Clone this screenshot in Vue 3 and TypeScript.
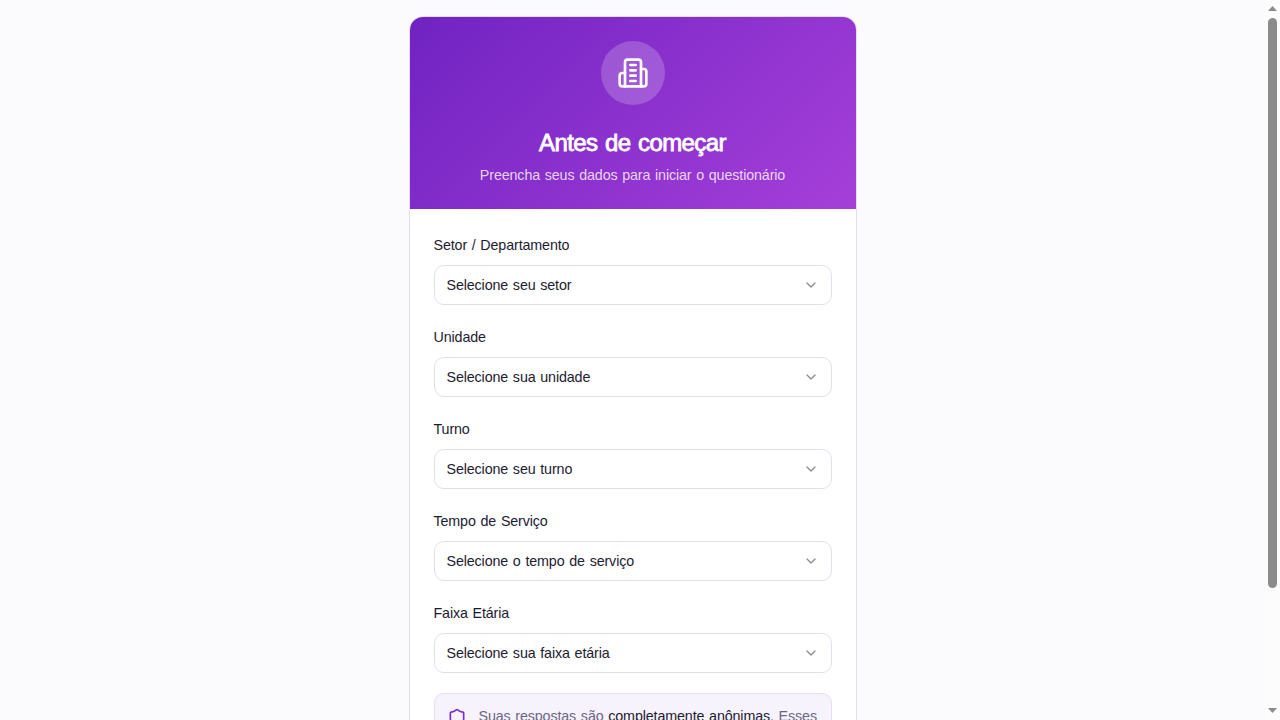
<script setup lang="ts">
interface Field {
  id: string
  label: string
  placeholder: string
}

const fields: Field[] = [
  { id: 'setor', label: 'Setor / Departamento', placeholder: 'Selecione seu setor' },
  { id: 'unidade', label: 'Unidade', placeholder: 'Selecione sua unidade' },
  { id: 'turno', label: 'Turno', placeholder: 'Selecione seu turno' },
  { id: 'tempo', label: 'Tempo de Serviço', placeholder: 'Selecione o tempo de serviço' },
  { id: 'faixa', label: 'Faixa Etária', placeholder: 'Selecione sua faixa etária' },
]
</script>

<template>
  <div class="viewport">
    <main class="page">
      <section class="card">
        <header class="hero">
          <div class="badge">
            <svg class="badge-icon" viewBox="0 0 24 24">
              <path d="M6 22V4a2 2 0 0 1 2-2h8a2 2 0 0 1 2 2v18Z" />
              <path d="M6 12H4a2 2 0 0 0-2 2v6a2 2 0 0 0 2 2h2" />
              <path d="M18 9h2a2 2 0 0 1 2 2v9a2 2 0 0 1-2 2h-2" />
              <path d="M10 6h4M10 10h4M10 14h4M10 18h4" />
            </svg>
          </div>
          <h1>Antes de começar</h1>
          <p>Preencha seus dados para iniciar o questionário</p>
        </header>
        <form class="form">
          <div v-for="f in fields" :key="f.id" class="field">
            <label :for="f.id">{{ f.label }}</label>
            <button :id="f.id" type="button" class="select">
              <span>{{ f.placeholder }}</span>
              <svg class="chevron" viewBox="0 0 24 24"><path d="m6 9 6 6 6-6" /></svg>
            </button>
          </div>
          <div class="notice">
            <svg class="shield" viewBox="0 0 24 24">
              <path d="M20 13c0 5-3.5 7.5-7.66 8.95a1 1 0 0 1-.67-.01C7.5 20.5 4 18 4 13V6a1 1 0 0 1 1-1c2 0 4.5-1.2 6.24-2.72a1.17 1.17 0 0 1 1.52 0C14.51 3.81 17 5 19 5a1 1 0 0 1 1 1z" />
            </svg>
            <p>Suas respostas são <strong>completamente anônimas</strong>. Esses</p>
          </div>
        </form>
      </section>
    </main>
    <div class="scrollbar">
      <svg class="arrow" viewBox="0 0 9 5"><path d="M4.5 0 9 5H0Z" /></svg>
      <div class="thumb"></div>
      <svg class="arrow" viewBox="0 0 9 5"><path d="M0 0h9L4.5 5Z" /></svg>
    </div>
  </div>
</template>

<style>
body {
  overflow: hidden;
  background: #fbfbfe;
}
</style>

<style scoped>
* {
  box-sizing: border-box;
  margin: 0;
}
.viewport {
  display: flex;
  height: 720px;
  overflow: hidden;
  background: #fbfbfe;
  color: #1d1a31;
  font-family: "Liberation Sans", Arial, sans-serif;
  font-size: 14.3px;
  letter-spacing: -0.13px;
  word-spacing: 0.9px;
}
.page {
  flex: 1;
  display: flex;
  justify-content: center;
  align-items: flex-start;
  padding: 16px;
}
.card {
  width: 448px;
  overflow: hidden;
  border: 1px solid #e1e0ea;
  border-radius: 14px;
  background: #fff;
}
.hero {
  display: flex;
  flex-direction: column;
  align-items: center;
  height: 192px;
  padding: 24px;
  background: linear-gradient(135deg, #7023c2, #a63fd9);
  color: #fff;
}
.badge {
  display: grid;
  place-items: center;
  width: 64px;
  height: 64px;
  margin-bottom: 22px;
  border-radius: 50%;
  background: rgb(255 255 255 / 20%);
}
svg {
  fill: none;
  stroke: currentColor;
  stroke-width: 2;
  stroke-linecap: round;
  stroke-linejoin: round;
}
.badge-icon {
  width: 32px;
  height: 32px;
}
h1 {
  margin-bottom: 6px;
  font-size: 24px;
  font-weight: 400;
  line-height: 32px;
  letter-spacing: -0.6px;
  word-spacing: 1.5px;
  -webkit-text-stroke: 0.8px currentColor;
}
.hero p {
  line-height: 20px;
  color: rgb(255 255 255 / 80%);
}
.form {
  display: flex;
  flex-direction: column;
  gap: 20px;
  padding: 24px;
}
.field {
  display: flex;
  flex-direction: column;
  gap: 8px;
}
label {
  line-height: 24px;
}
.select {
  display: flex;
  align-items: center;
  justify-content: space-between;
  height: 40px;
  padding: 0 12px;
  border: 1px solid #e1e0ea;
  border-radius: 10px;
  background: #fff;
  color: inherit;
  font: inherit;
  line-height: 20px;
  letter-spacing: inherit;
  word-spacing: inherit;
}
.chevron {
  width: 16px;
  height: 16px;
  opacity: 0.5;
}
.notice {
  display: flex;
  gap: 12px;
  height: 92px;
  padding: 12px;
  border: 1px solid #e8dcf7;
  border-radius: 10px;
  background: #f7f3fc;
  color: #6c6684;
}
.notice p {
  line-height: 20px;
  white-space: nowrap;
}
.notice strong {
  color: #1d1a31;
  font-weight: 400;
}
.shield {
  flex: none;
  width: 20px;
  height: 20px;
  margin-top: 2px;
  color: #7b2bd0;
}
.scrollbar {
  display: flex;
  flex-direction: column;
  align-items: center;
  width: 15px;
  padding: 6px 0 7px;
  background: #fcfcfc;
}
.thumb {
  width: 9px;
  height: 570px;
  margin: 7px 0 auto;
  border-radius: 5px;
  background: #8b8b8b;
}
.arrow {
  width: 9px;
  height: 5px;
  fill: #8b8b8b;
  stroke: none;
}
</style>
